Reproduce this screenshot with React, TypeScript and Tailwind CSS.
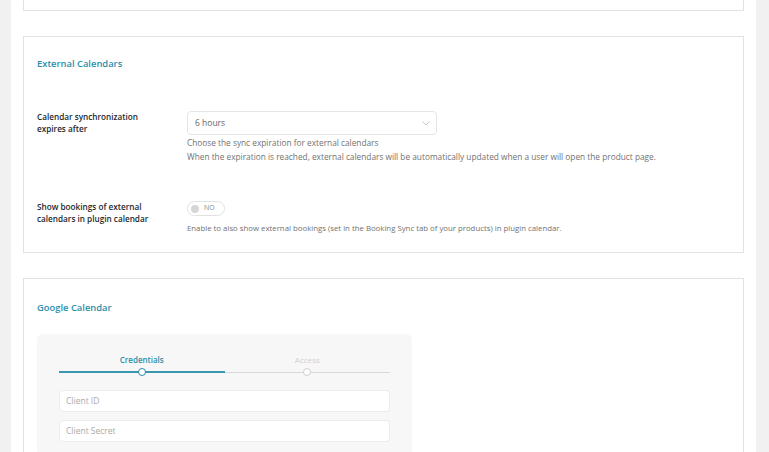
import React from "react";

const font = { fontFamily: '"Open Sans", "Noto Sans", sans-serif' };

function Row({ label, children }: { label: React.ReactNode; children: React.ReactNode }) {
  return (
    <div className="grid grid-cols-[150px_1fr]">
      <div className="pr-[30px] text-[8.2px] leading-[12px] font-semibold text-[#23282d]">{label}</div>
      <div>{children}</div>
    </div>
  );
}

export default function App() {
  return (
    <div className="flex w-[769px] h-[452px] overflow-hidden bg-[#f1f1f1]" style={font}>
      <div className="w-[11px] shrink-0 bg-[#f1f1f1]" />
      <div className="w-[745px] shrink-0 bg-white px-[12px]">
        <div className="h-[11px] border-x border-b border-[#e2e2e2]" />
        <div className="mt-[25px] border border-[#e2e2e2] pt-[20px] pb-[17px] px-[13px]">
          <h2 className="text-[9.4px] leading-[14px] font-semibold text-[#2a8fab]">External Calendars</h2>
          <div className="mt-[40px]">
            <Row label={<>Calendar synchronization<br />expires after</>}>
              <div className="w-[250px] h-[24px] border border-[#e6e6e6] rounded-[4px] flex items-center justify-between pl-[7px] pr-[6px] text-[8.5px] text-[#666]">
                <span>6 hours</span>
                <svg width="8" height="5" viewBox="0 0 8 5" fill="none" stroke="#c8c8c8" strokeWidth="1">
                  <path d="M0.5 0.5 L4 4 L7.5 0.5" />
                </svg>
              </div>
              <div className="mt-[1px] text-[8.3px] leading-[14px] text-[#727272]">
                <div>Choose the sync expiration for external calendars</div>
                <div>When the expiration is reached, external calendars will be automatically updated when a user will open the product page.</div>
              </div>
            </Row>
          </div>
          <div className="mt-[37px]">
            <Row label={<>Show bookings of external<br />calendars in plugin calendar</>}>
              <div className="w-[38px] h-[15px] border border-[#e2e2e2] rounded-full flex items-center pl-[3px] gap-[5px]">
                <span className="w-[8px] h-[8px] rounded-full bg-[#d6d6d6]" />
                <span className="text-[7px] text-[#8a8a8a]">NO</span>
              </div>
              <div className="mt-[5px] text-[7.8px] leading-[14px] text-[#727272]">
                Enable to also show external bookings (set in the Booking Sync tab of your products) in plugin calendar.
              </div>
            </Row>
          </div>
        </div>
        <div className="mt-[25px] border border-[#e2e2e2] pt-[22px] px-[13px] h-[200px]">
          <h2 className="text-[9.4px] leading-[14px] font-semibold text-[#2a8fab]">Google Calendar</h2>
          <div className="mt-[19px] w-[375px] bg-[#f7f7f7] rounded-[6px] pt-[20px] px-[22px] pb-[14px]">
            <div className="grid grid-cols-2">
              <div className="flex flex-col items-center">
                <span className="text-[8px] leading-[12px] font-semibold text-[#2a8fab]">Credentials</span>
                <div className="relative w-full h-[8px] mt-[2px] flex items-center">
                  <div className="w-full h-[1.5px] bg-[#3a97b0]" />
                  <div className="absolute left-1/2 -translate-x-1/2 w-[8px] h-[8px] rounded-full border-[1.5px] border-[#2a8fab] bg-white" />
                </div>
              </div>
              <div className="flex flex-col items-center">
                <span className="text-[8px] leading-[12px] text-[#d0d0d0]">Access</span>
                <div className="relative w-full h-[8px] mt-[2px] flex items-center">
                  <div className="w-full h-px bg-[#d8d8d8]" />
                  <div className="absolute left-1/2 -translate-x-1/2 w-[8px] h-[8px] rounded-full border border-[#cfcfcf] bg-white" />
                </div>
              </div>
            </div>
            <div className="mt-[14px] flex flex-col gap-[8px]">
              <div className="h-[22px] bg-white border border-[#ececec] rounded-[4px] flex items-center pl-[6px] text-[8.5px] text-[#aaa]">Client ID</div>
              <div className="h-[22px] bg-white border border-[#ececec] rounded-[4px] flex items-center pl-[6px] text-[8.5px] text-[#aaa]">Client Secret</div>
            </div>
          </div>
        </div>
      </div>
      <div className="flex-1 bg-[#f1f1f1]" />
    </div>
  );
}
